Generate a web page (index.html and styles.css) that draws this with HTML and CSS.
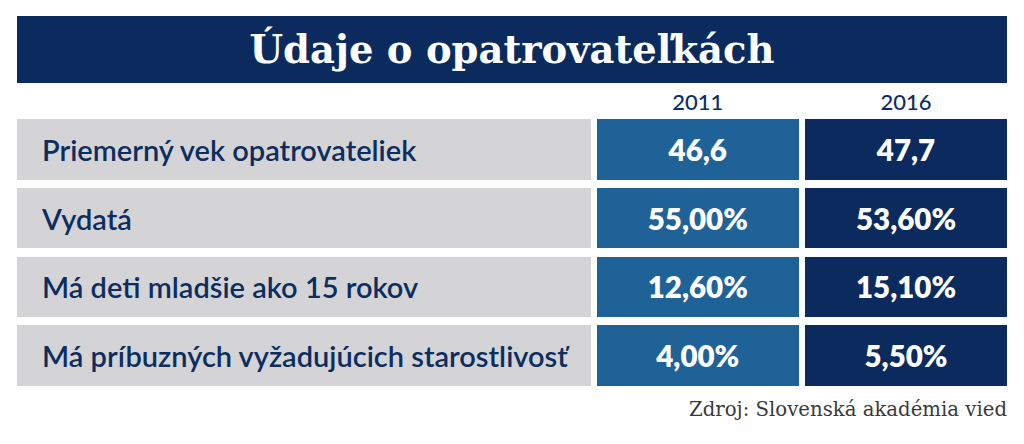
FILE: index.html
```html
<!DOCTYPE html>
<html lang="sk">
<head>
<meta charset="utf-8">
<title>Údaje o opatrovateľkách</title>
<link rel="stylesheet" href="styles.css">
</head>
<body>
<main class="chart">
  <h1 class="title">Údaje o opatrovateľkách</h1>
  <div class="years">
    <div class="year-spacer"></div>
    <div class="year">2011</div>
    <div class="year">2016</div>
  </div>
  <div class="rows">
    <div class="label">Priemerný vek opatrovateliek</div>
    <div class="val val-a">46,6</div>
    <div class="val val-b">47,7</div>

    <div class="label">Vydatá</div>
    <div class="val val-a">55,00%</div>
    <div class="val val-b">53,60%</div>

    <div class="label">Má deti mladšie ako 15 rokov</div>
    <div class="val val-a">12,60%</div>
    <div class="val val-b">15,10%</div>

    <div class="label">Má príbuzných vyžadujúcich starostlivosť</div>
    <div class="val val-a">4,00%</div>
    <div class="val val-b">5,50%</div>
  </div>
  <p class="source">Zdroj: Slovenská akadémia vied</p>
</main>
</body>
</html>
```
FILE: styles.css
```css
html, body {
  margin: 0;
  padding: 0;
  background: #ffffff;
}

.chart {
  width: 990px;
  margin: 0 0 0 17px;
  padding-top: 16px;
}

.title {
  margin: 0;
  height: 67px;
  background: #0b2b5e;
  color: #ffffff;
  font-family: "DejaVu Serif", serif;
  font-weight: bold;
  font-size: 38.5px;
  display: flex;
  align-items: center;
  justify-content: center;
}

.years,
.rows {
  display: grid;
  grid-template-columns: 573.5px 202px 202px;
  column-gap: 6.25px;
}

.years {
  height: 36px;
}

.rows {
  grid-template-rows: repeat(4, 60.5px);
  row-gap: 8.3px;
}

.year {
  color: #0c2d5f;
  font-family: "Lato", sans-serif;
  font-weight: 500;
  font-size: 22px;
  display: flex;
  align-items: flex-end;
  justify-content: center;
  padding-bottom: 4px;
}

.label {
  background: #d4d4d6;
  color: #0c2d5f;
  font-family: "Lato", sans-serif;
  font-weight: 600;
  font-size: 29px;
  display: flex;
  align-items: center;
  padding-left: 25px;
}

.val {
  color: #ffffff;
  font-family: "Lato", sans-serif;
  font-weight: 800;
  font-size: 29.5px;
  display: flex;
  align-items: center;
  justify-content: center;
}

.val-a {
  background: #1f6297;
}

.val-b {
  background: #0b2b5e;
}

.source {
  margin: 12px 0 0;
  text-align: right;
  font-family: "DejaVu Serif", serif;
  font-size: 19.7px;
  color: #3a3a3a;
}
```
